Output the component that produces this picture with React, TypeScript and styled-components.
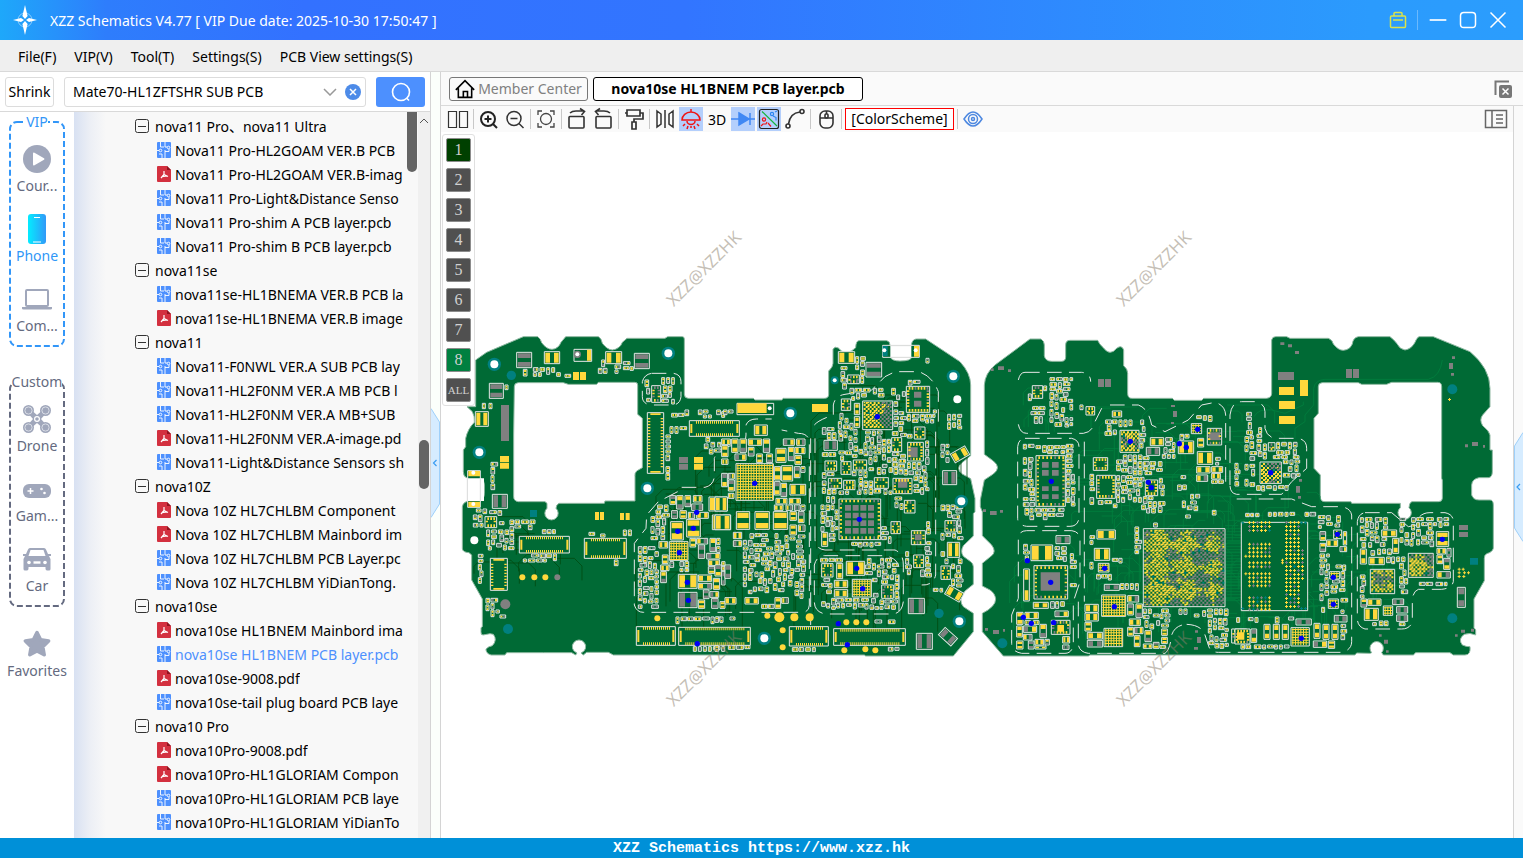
import React from "react";
import styled, { createGlobalStyle } from "styled-components";

const GlobalStyle = createGlobalStyle`
  * { box-sizing: border-box; }
  html, body { margin: 0; height: 100%; }
  body { font-family: "Noto Sans", "Noto Sans CJK SC", sans-serif; font-size: 14px; color: #000; background: #fff; }
  button, input { font: inherit; color: inherit; }
  button { border: 0; padding: 0; background: none; cursor: pointer; }
  svg { display: block; }
`;

/* ---------- shell ---------- */

const Shell = styled.div`
  display: flex;
  flex-direction: column;
  height: 100vh;
  overflow: hidden;
`;

const TitleBar = styled.header`
  display: flex;
  align-items: center;
  flex: 0 0 40px;
  padding: 0 15px 0 12px;
  color: #fff;
  background: linear-gradient(90deg, #1ea8fa 0%, #2e7dfc 7%, #3371ff 20%, #3275ff 45%, #2b9bfd 90%, #2b9dfd 100%);
`;

const AppTitle = styled.h1`
  flex: 1;
  margin: 0 0 0 12px;
  font-size: 14px;
  font-weight: 400;
  white-space: nowrap;
`;

const WindowButtons = styled.div`
  display: flex;
  align-items: center;
  gap: 10px;
`;

const TitleDivider = styled.span`
  width: 1px;
  height: 20px;
  background: #6bb9fd;
`;

const MenuBar = styled.nav`
  display: flex;
  align-items: center;
  gap: 18px;
  flex: 0 0 32px;
  padding: 2px 18px 0;
  background: #efefef;
  border-bottom: 1px solid #d9d9d9;
`;

const MenuButton = styled.button`
  white-space: nowrap;
`;

const Workspace = styled.div`
  display: flex;
  flex: 1;
  min-height: 0;
`;

const StatusBar = styled.footer`
  flex: 0 0 20px;
  overflow: hidden;
  background: #0090d8;
  color: #fff;
  text-align: center;
  font: bold 15px/22px "Liberation Mono", monospace;
`;

/* ---------- side bar ---------- */

const SideBar = styled.aside`
  display: flex;
  flex-direction: column;
  flex: 0 0 431px;
  min-width: 0;
  border-right: 1px solid #d4d4d4;
`;

const SearchRow = styled.form`
  display: flex;
  align-items: center;
  flex: 0 0 40px;
  padding: 0 5px;
  gap: 10px;
  border-bottom: 1px solid #d9d9d9;
`;

const ShrinkButton = styled.button`
  width: 49px;
  height: 30px;
  border: 1px solid #dcdcdc;
  border-radius: 3px;
  background: #fff;
`;

const SearchField = styled.div`
  display: flex;
  align-items: center;
  gap: 8px;
  flex: 1;
  height: 30px;
  padding: 0 4px 0 8px;
  border: 1px solid #dcdcdc;
  border-radius: 3px;
`;

const SearchInput = styled.input`
  flex: 1;
  min-width: 0;
  border: 0;
  padding: 0;
  outline: none;
  background: none;
`;

const SearchButton = styled.button`
  display: grid;
  place-items: center;
  width: 49px;
  height: 30px;
  border-radius: 3px;
  background: #4d90fe;
`;

const SideBody = styled.div`
  display: flex;
  flex: 1;
  min-height: 0;
`;

const Categories = styled.nav`
  display: flex;
  flex-direction: column;
  align-items: center;
  flex: 0 0 74px;
  overflow: hidden;
  background: #fff;
`;

const Group = styled.section<{ $color: string; $after: number }>`
  position: relative;
  display: flex;
  flex-direction: column;
  align-items: center;
  flex: none;
  width: 58px;
  height: 236px;
  margin-bottom: ${(p) => p.$after}px;
  color: ${(p) => p.$color};
`;

const Frame = styled.svg`
  position: absolute;
  inset: 9px 0 0 0;
  width: 58px;
  height: 227px;
`;

const GroupTitle = styled.h2`
  position: relative;
  margin: 0;
  background: #fff;
  font-size: 14px;
  line-height: 20px;
  font-weight: 400;
`;

const Category = styled.button<{ $active?: boolean }>`
  position: relative;
  display: flex;
  flex-direction: column;
  align-items: center;
  justify-content: flex-end;
  flex: none;
  height: 70px;
  padding-bottom: 6px;
  line-height: 20px;
  white-space: nowrap;
  color: ${(p) => (p.$active ? "#2f97f7" : "#646a80")};
`;

const CategoryIcon = styled.span`
  display: grid;
  place-items: center;
  height: 34px;
`;

const Tree = styled.ul`
  flex: 1;
  min-width: 0;
  margin: 0;
  padding: 2px 1px 0 60px;
  list-style: none;
  overflow: hidden;
  background: linear-gradient(90deg, #d8e1f2 0, #eceff5 16px, #f8f8f8 32px);
`;

const TreeRow = styled.li<{ $leaf?: boolean }>`
  display: flex;
  align-items: center;
  height: 24px;
  padding-left: ${(p) => (p.$leaf ? 23 : 1)}px;
  gap: ${(p) => (p.$leaf ? 4 : 6)}px;
`;

const TreeIcon = styled.span`
  flex: none;
`;

const TreeLabel = styled.a<{ $selected?: boolean }>`
  overflow: hidden;
  white-space: nowrap;
  text-decoration: none;
  color: ${(p) => (p.$selected ? "#4d90fe" : "#000")};
`;

const InnerTrack = styled.div`
  flex: 0 0 11px;
  background: #f8f8f8;
`;

const InnerThumb = styled.div`
  width: 10px;
  height: 60px;
  border-radius: 0 0 5px 5px;
  background: #646464;
`;

const OuterTrack = styled.div`
  display: flex;
  flex-direction: column;
  align-items: center;
  flex: 0 0 12px;
  padding-top: 6px;
  background: #f0f0f0;
`;

const OuterThumb = styled.div`
  width: 10px;
  height: 49px;
  margin-top: 316px;
  border-radius: 5px;
  background: #646464;
`;

/* ---------- splitter ---------- */

const Gutter = styled.div<{ $offset: number }>`
  flex: 0 0 9px;
  padding-top: ${(p) => p.$offset}px;
  background: #fbfffb;
`;

const RightGutter = styled(Gutter)`
  flex-basis: 10px;
  border-left: 1px solid #d4d4d4;
  background: #fafafa;
`;

/* ---------- main ---------- */

const Main = styled.main`
  display: flex;
  flex-direction: column;
  flex: 1;
  min-width: 0;
  border-left: 1px solid #d4d4d4;
`;

const TabRow = styled.div`
  display: flex;
  align-items: center;
  gap: 5px;
  flex: 0 0 34px;
  padding: 0 10px 0 8px;
  background: #fafafa;
  border-bottom: 1px solid #d9d9d9;
`;

const Tab = styled.button<{ $active?: boolean }>`
  display: flex;
  align-items: center;
  justify-content: center;
  gap: 3px;
  width: ${(p) => (p.$active ? 270 : 139)}px;
  height: 24px;
  border: 1px solid ${(p) => (p.$active ? "#000" : "#777")};
  border-radius: 3px;
  background: ${(p) => (p.$active ? "#fff" : "#fafafa")};
  color: ${(p) => (p.$active ? "#000" : "#808080")};
  font-weight: ${(p) => (p.$active ? 700 : 400)};
  white-space: nowrap;
`;

const Spacer = styled.span`
  flex: 1;
`;

const MainBody = styled.div`
  display: flex;
  flex: 1;
  min-height: 0;
`;

const ViewColumn = styled.div`
  display: flex;
  flex-direction: column;
  flex: 1;
  min-width: 0;
`;

const ToolBar = styled.div`
  display: flex;
  align-items: center;
  gap: 2px;
  flex: 0 0 26px;
  padding: 0 5px;
  background: #fafafa;
`;

const Tool = styled.button<{ $on?: boolean }>`
  display: grid;
  place-items: center;
  width: 24px;
  height: 24px;
  background: ${(p) => (p.$on ? "#b4cffc" : "none")};
`;

const ToolDivider = styled.span`
  width: 1px;
  height: 20px;
  margin: 0 1px;
  background: #c8c8c8;
`;

const SchemeButton = styled.button`
  width: 109px;
  height: 22px;
  border: 1px solid #f00;
  background: #fff;
  line-height: 18px;
`;

const Canvas = styled.div`
  position: relative;
  flex: 1;
  min-height: 0;
  background: #fff;
`;

const BoardDrawing = styled.svg`
  width: 100%;
  height: 100%;
`;

const LayerPanel = styled.div`
  position: absolute;
  left: 1px;
  top: 2px;
  display: flex;
  flex-direction: column;
  gap: 6px;
  padding: 3px;
  border: 1px solid #e0e0e0;
  border-radius: 3px;
  background: #fff;
`;

const LayerButton = styled.button<{ $fill: string; $long: boolean }>`
  width: 25px;
  height: 24px;
  border: 1px solid #8c8c8c;
  border-radius: 2px;
  background: ${(p) => p.$fill};
  color: #d0d0d0;
  font: ${(p) => (p.$long ? 11 : 16)}px/20px "Liberation Serif", serif;
`;

/* ---------- board drawing ---------- */

type Box = [number, number, number, number];

class Layers {
  silk = "";
  yellow = "";
  gray = "";
  teal = "";
}

// Small linear generator so that the parts sit in the same place on each draw.
const makeRandom = (seed: number) => {
  let s = seed;
  return () => {
    s = (s * 1103515245 + 12345) & 0x7fffffff;
    return s / 0x7fffffff;
  };
};

const rect = (x: number, y: number, w: number, h: number) => `M${x} ${y}h${w}v${h}h${-w}z`;

const addPart = (l: Layers, kind: string, b: Box, rnd: () => number) => {
  const [x, y, w, h] = b;
  const outline = () => {
    l.silk += rect(x, y, w, h);
  };
  switch (kind) {
    case "y": l.yellow += rect(x, y, w, h); break;
    case "g": l.gray += rect(x, y, w, h); break;
    case "t": l.teal += rect(x, y, w, h); break;
    case "o": outline(); break;
    case "h":
    case "hg": {
      outline();
      const p = Math.round(w * 0.3);
      const d = rect(x + 3, y + 3, p, h - 6) + rect(x + w - 3 - p, y + 3, p, h - 6);
      if (kind === "h") l.yellow += d; else l.gray += d;
      break;
    }
    case "v":
    case "vg": {
      outline();
      const p = Math.round(h * 0.3);
      const d = rect(x + 3, y + 3, w - 6, p) + rect(x + 3, y + h - 3 - p, w - 6, p);
      if (kind === "v") l.yellow += d; else l.gray += d;
      break;
    }
    case "cn":
      outline();
      for (let i = x + 20; i < x + w - 18; i += 6) {
        l.yellow += rect(i, y + 1, 3, 8) + rect(i, y + h - 9, 3, 8);
      }
      l.yellow += rect(x + 3, y + 10, 6, h - 20) + rect(x + w - 9, y + 10, 6, h - 20);
      break;
    case "cv":
      outline();
      for (let i = y + 16; i < y + h - 14; i += 9) {
        l.yellow += rect(x + 2, i, 7, 4) + rect(x + w - 9, i, 7, 4);
      }
      l.yellow += rect(x + 9, y + 2, w - 18, 5) + rect(x + 9, y + h - 7, w - 18, 5);
      break;
    case "ic": {
      outline();
      const step = w > 80 ? 12 : 9;
      const add = (d: string) => {
        if (rnd() < 0.22) l.gray += d; else l.yellow += d;
      };
      for (let i = x + 7; i < x + w - 8; i += step) {
        add(rect(i, y + 2, 5, 8));
        add(rect(i, y + h - 10, 5, 8));
      }
      for (let i = y + 12; i < y + h - 12; i += step) {
        add(rect(x + 2, i, 7, 5));
        add(rect(x + w - 9, i, 7, 5));
      }
      break;
    }
    case "b":
      outline();
      for (let i = x + 4; i < x + w - 3; i += 8) l.yellow += rect(i, y + 2, 3, h - 4);
      for (let j = y + 4; j < y + h - 3; j += 8) l.yellow += rect(x + 2, j, w - 4, 3);
      break;
    case "x":
      outline();
      for (let j = y + 3; j < y + h - 5; j += 6) {
        for (let i = x + 3; i < x + w - 5; i += 6) {
          const zone = Math.sin(i / 13) * 0.5 + Math.cos(j / 11) * 0.5 + ((i - x) / w) * 1.1;
          const odd = ((i - x + j - y) / 6) % 2 === 0;
          if (!odd && rnd() < 0.6) continue;
          const d = rect(i, j, odd ? 6 : 4, odd ? 6 : 4);
          if (rnd() < 0.03) l.teal += d;
          else if (zone + rnd() > 1.25) l.gray += d;
          else l.yellow += d;
        }
      }
      break;
    default:
      break;
  }
};

const addSmall = (l: Layers, x: number, y: number, w: number, h: number, rnd: () => number) => {
  l.silk += rect(x, y, w, h);
  const horizontal = w >= h;
  const c = rnd();
  const lw = Math.max(4, w * 0.3);
  const lh = Math.max(4, h * 0.3);
  const first = horizontal ? rect(x + 2, y + 2, lw, h - 4) : rect(x + 2, y + 2, w - 4, lh);
  const second = horizontal ? rect(x + w - 2 - lw, y + 2, lw, h - 4) : rect(x + 2, y + h - 2 - lh, w - 4, lh);
  if (c < 0.5) l.yellow += first + second;
  else if (c < 0.75) { l.yellow += first; l.gray += second; }
  else if (c < 0.92) { l.gray += first; l.yellow += second; }
  else l.gray += first + second;
};

const hits = (a: Box, b: Box) =>
  a[0] < b[0] + b[2] + 3 && a[0] + a[2] + 3 > b[0] && a[1] < b[1] + b[3] + 3 && a[1] + a[3] + 3 > b[1];

const buildSheet = (parts: string, fields: string, seed: number): Layers => {
  const l = new Layers();
  const rnd = makeRandom(seed);
  const taken: Box[] = [];
  for (const p of parts.split(";")) {
    const [kind, ...n] = p.trim().split(" ");
    const b = n.map(Number) as Box;
    taken.push(b);
    addPart(l, kind, b, rnd);
  }
  for (const f of fields.split(";")) {
    const [fx, fy, fw, fh, big = 0] = f.trim().split(" ").map(Number);
    const unit = big ? 4 : 0;
    for (let y = fy; y < fy + fh - 7; y += 5) {
      for (let x = fx; x < fx + fw - 7; x += 5) {
        if (rnd() < 0.12) continue;
        const flip = rnd() < 0.5;
        const a = 14 + unit * 3 + Math.floor(rnd() * 3) * (3 + unit);
        const c = 9 + unit * 2 + Math.floor(rnd() * 2) * 2;
        const w = Math.min(flip ? a : c, fx + fw - x);
        const h = Math.min(flip ? c : a, fy + fh - y);
        const box: Box = [x, y, w, h];
        if (taken.some((t) => hits(box, t))) continue;
        taken.push(box);
        if (rnd() < 0.1) continue;
        addSmall(l, x, y, w, h, rnd);
      }
    }
  }
  return l;
};

const grid = (kind: string, x: number, y: number, cols: number, rows: number, dx: number, dy: number, w: number, h: number) => {
  const out: string[] = [];
  for (let j = 0; j < rows; j++) for (let i = 0; i < cols; i++) out.push(`${kind} ${x + i * dx} ${y + j * dy} ${w} ${h}`);
  return out.join(";");
};

const sheetA = buildSheet(
  "vg 185 82 45 46;h 268 80 46 36;o 357 73 53 36;y 396 74 12 33;h 452 80 48 36;vg 538 85 45 46;y 354 141 18 24;y 375 141 18 24;vg 103 175 42 45;g 138 240 24 108;h 61 260 39 44;y 135 393 27 18;y 135 413 27 18;hg 112 508 45 42;ic 90 575 35 33;cn 193 634 150 50;cn 388 640 126 60;cv 106 700 51 96;cv 577 263 49 182;ic 590 182 27 50;g 672 396 27 18;g 672 416 27 18;y 717 396 27 18;y 717 416 27 18;y 420 561 12 24;y 435 561 12 24;y 495 564 12 21;y 512 564 12 21;cn 703 287 150 47;v 647 590 38 55;v 695 583 41 53;h 762 516 55 42;h 772 570 55 44;b 643 650 56 56;h 670 748 56 42;hg 670 802 56 46;cn 544 905 117 56;cn 671 907 215 54;o 38 437 38 110;y 40 438 35 16;y 40 530 35 16;t 225 555 21 21",
  "205 128 115 26;430 105 30 40;480 110 55 35;570 165 18 65;620 158 38 80;64 552 90 22;55 570 32 36;128 575 24 36;165 585 75 35;95 615 85 60;205 687 100 24;93 820 40 55;135 870 24 20;645 265 50 60;690 255 120 24;748 337 55 50;628 330 18 138;588 540 55 115;645 512 115 68 1;550 665 60 185;612 645 30 200 1;705 640 90 105 1;730 740 80 110 1;610 710 200 30;663 876 150 20;402 622 48 16;108 412 22 90;70 688 14 88;690 965 120 14;262 614 42 12;150 180 12 42;82 235 32 16;330 148 22 12;505 615 24 18;478 700 12 24",
  7,
);

const sheetB = buildSheet(
  "y 67 235 88 29;o 66 235 110 34;y 291 237 48 24;h 118 300 39 31;vg 453 112 47 44;h 370 80 49 35;x 443 228 90 86;ic 574 184 70 78;g 597 200 22 18;g 597 227 22 18;ic 398 150 35 26;b 63 416 112 110;ic 372 522 125 122;" +
    grid("g", 390, 540, 4, 4, 23, 23, 18, 17) +
    ";v 183 370 30 42;v 200 422 33 46;h 225 478 47 32;v 64 560 40 53;v 120 560 43 53;v 175 560 43 53;h 0 516 37 42;h 0 570 46 44;ic 578 352 47 56;g 580 367 28 30;ic 534 460 57 46;g 549 462 28 26;ic 589 617 42 42;g 600 628 20 18;hg 683 437 42 42;ic 690 587 34 34;h 697 652 37 45;ic 678 723 28 40;hg 580 820 48 46;hg 604 925 48 48;h 394 709 55 42;b 412 763 57 53;ic 500 780 35 40;cn 223 905 117 58;cn 356 911 215 50;ic 320 716 34 40;ic 379 222 28 34;v 418 235 16 34;v 418 275 16 32;ic 330 408 35 30;ic 378 410 30 38;ic 415 405 40 30;ic 478 458 42 32;ic 386 466 34 28;ic 340 460 40 30;ic 598 306 32 36;ic 596 690 30 38;ic 528 590 28 36;ic 530 338 30 42;hg 327 346 40 30;y 597 63 15 32;t 503 63 15 30;o 503 61 110 36;ic 568 526 32 38;v 320 622 18 42;v 365 715 18 46;h 358 766 40 22;h 358 794 40 22",
  "20 342 250 76 1;178 420 92 100 1;20 425 38 95 1;178 520 92 36 1;225 560 45 70 1;55 622 25 70 1;85 626 155 180;240 630 32 190;0 720 55 40 1;30 818 190 32 1;378 125 18 70;422 95 30 90;370 265 48 60;405 190 160 36;532 195 42 145;562 268 98 26;322 308 320 200;318 540 42 110;335 515 34 100;500 590 28 66;540 516 26 40;312 700 240 70;320 765 232 88;410 652 118 14;572 680 78 82;630 590 18 88;678 540 66 165;680 702 64 84;580 166 52 14;650 220 14 66;698 268 42 56;678 358 24 88;0 962 105 18;232 968 80 12;480 885 70 22;520 962 32 26;0 876 60 16;0 255 56 22;618 100 30 24;655 790 28 20",
  23,
);

const sheetC = buildSheet(
  "ic 172 182 31 38;g 369 162 18 24;g 390 162 18 24;ic 183 392 88 152;" +
    grid("g", 201, 411, 2, 2, 30, 24, 20, 17) + ";" + grid("g", 201, 484, 2, 2, 30, 24, 20, 14) +
    ";x 435 316 57 66;h 526 338 40 24;hg 514 367 40 24;h 610 348 46 38;ic 697 310 43 50;g 701 322 34 24;h 667 380 46 38;ic 355 398 43 38;ic 365 451 56 69;ic 511 465 37 47;b 649 296 31 30;h 168 660 65 47;ic 177 722 101 100;g 197 742 58 55;h 358 670 46 36;h 366 615 55 27;x 505 611 245 234;b 380 810 72 64;b 387 910 56 55;h 330 838 40 24;h 330 864 40 24;ic 229 886 56 42;y 247 900 20 20;ic 770 912 45 42;h 175 832 45 18;hg 388 778 45 18;g 69 124 18 11;g 48 130 8 8;g 99 133 9 8;g 45 558 20 12;g 24 553 9 8;g 75 555 9 8;g 594 258 12 18;g 588 240 12 6;g 588 291 9 6;g 54 915 18 12;g 30 909 9 8;g 84 912 6 8;g 666 936 12 18;g 660 916 9 7;g 657 966 12 8;h 412 258 28 18;b 370 715 32 26;v 146 732 17 96;hg 243 632 42 24;ic 333 245 26 25;h 337 922 46 20;hg 337 946 46 20;y 803 590 7 4",
  "160 172 12 64;206 178 12 30;225 158 68 148;168 245 42 50;315 235 20 32;392 285 118 36;390 315 42 20;495 320 26 60;562 338 38 62;425 390 145 60;425 452 82 80;500 515 70 52;548 455 20 60;345 448 18 90;370 522 60 26;145 358 34 195;274 358 26 185;183 362 88 24;150 550 122 34;610 328 32 18;618 452 28 14;608 480 60 16;622 508 52 54;632 570 24 22;712 556 36 16;480 606 22 80;146 658 20 60;240 665 36 44;286 686 18 100;222 830 56 20;125 862 98 36 1;125 898 98 74 1;240 858 44 22 1;238 935 46 38 1;345 632 18 26;345 712 22 34;365 748 46 22;412 700 34 16;436 776 58 26;458 812 46 160 1;505 852 80 60;505 912 72 58 1;612 852 30 16;658 852 108 26;700 880 60 90;330 892 46 26 1;665 272 80 24;665 425 80 50 1;722 372 20 48;668 340 18 34 1;708 244 20 22;780 415 15 68;536 594 18 12;715 296 28 14;570 338 30 20",
  41,
);

const plus = (x: number, y: number) => `M${x} ${y + 3}h9v3h-9zM${x + 3} ${y}h3v9h-3z`;

const sheetD = buildSheet(
  "g 129 141 48 24;y 132 186 45 24;y 132 228 48 24;y 132 273 48 24;y 195 165 24 48;g 333 132 18 27;g 354 132 18 27;x 75 411 64 64;o 19 592 199 265;ic 100 353 20 25;h 440 615 45 20;v 473 640 18 45;v 604 620 37 44;x 520 685 75 72;x 406 733 73 73;h 388 850 42 36;b 445 843 28 28;b 168 908 55 55;v 87 898 18 45;v 115 898 18 45;v 142 898 18 45;v 237 895 18 45;v 264 898 18 45;v 291 898 18 45;ic 0 912 45 45;y 6 922 22 22;vg 667 787 24 60;g 672 600 27 15;g 672 621 27 15;t 705 699 24 20;h 402 697 46 22;v 376 672 18 45;hg 183 882 46 18;hg 298 871 38 20;g 642 114 12 18;g 651 94 9 8;g 648 144 9 8;g 711 351 18 12;g 690 358 9 9;g 744 360 6 8;g 183 483 12 20;g 192 462 9 8;g 189 513 9 8;g 159 58 12 9;g 180 78 12 9;g 136 52 12 8;g 678 914 12 9;g 708 911 9 9;g 660 928 8 7;g 447 944 12 12;g 432 928 8 7;g 453 976 8 7;b 284 740 30 22;b 280 822 30 28;ic 296 615 24 26",
  "35 262 20 80;66 308 14 68;30 335 54 78;85 352 112 50;30 418 42 70;145 375 50 92;60 482 100 16;12 565 60 10;100 562 142 12;250 572 66 38;255 620 80 60 1;255 682 28 180;288 720 48 84;318 820 22 45;5 878 72 22;116 876 60 18;256 876 40 16;48 912 26 48 1;18 960 145 12;235 948 100 22 1;318 898 18 46;376 578 82 92;408 672 88 24;450 696 60 26;495 578 110 92;606 670 42 100 1;376 735 24 84;378 822 140 24 1;485 845 34 44 1;388 888 130 14;494 700 24 112;548 772 88 10;562 578 80 34;34 345 16 26",
  59,
);

const memoryDots = () => {
  let yellow = "";
  let gray = "";
  let teal = "";
  const rnd = makeRandom(11);
  const put = (x: number, y: number) => {
    const c = rnd();
    if (c < 0.72) yellow += plus(x, y);
    else if (c < 0.94) gray += plus(x, y);
    else teal += plus(x, y);
  };
  [588, 600, 612, 653, 665, 677, 689, 709, 721, 742, 754, 766, 778, 814, 826, 838, 848].forEach((y) => {
    for (let x = 39; x < 110; x += 12) put(x, y);
  });
  for (let y = 588; y < 852; y += 12) {
    const last = y > 670 && y < 765 ? 200 : 188;
    for (let x = 150; x < last; x += 12) put(x, y);
  }
  [[28, 689], [28, 742], [138, 701], [138, 709]].forEach(([x, y]) => { yellow += plus(x, y); });
  [[19, 589], [207, 589], [19, 846], [207, 846], [195, 589], [195, 846]].forEach(([x, y]) => { teal += plus(x, y); });
  [[668, 728], [680, 728], [668, 739], [684, 739], [696, 739], [668, 750], [682, 750], [639, 219]].forEach(([x, y]) => { yellow += plus(x, y); });
  return { yellow, gray, teal };
};
const memory = memoryDots();

// Copper traces: short runs with one 45 degree bend, kept above the board's lower edge.
const traces = (fields: string, seed: number) => {
  const rnd = makeRandom(seed);
  let d = "";
  for (const f of fields.split(";")) {
    const [x, y, w, h, n] = f.trim().split(" ").map(Number);
    for (let i = 0; i < n; i++) {
      const k = Math.round(8 + rnd() * 20);
      const sx = rnd() < 0.5 ? 1 : -1;
      const run = Math.round(20 + rnd() * w * 0.25);
      const fall = Math.round(20 + rnd() * h * 0.25);
      const x0 = Math.round(x + rnd() * w);
      const y0 = Math.round(y + rnd() * h);
      d += `M${x0} ${y0}h${run * sx}l${k * sx} ${k}V${Math.min(y0 + k + fall, 970)}`;
    }
  }
  return d;
};
const darkTraces = traces("600 480 200 340 40;800 340 240 470 60;1100 180 330 640 110;1340 300 100 450 14;110 560 220 160 18", 5);
const lightTraces = traces("1900 240 480 320 60;1900 560 180 300 30;2130 500 220 330 40;2340 480 250 400 60;2590 580 260 250 24;1700 640 160 200 14;1720 170 140 120 8", 9);
const busLines = Array.from({ length: 26 }, (_, i) => `M${2310 + (i % 3) * 3} ${602 + i * 9}h${40 + (i % 5) * 6}`).join("");

const LEFT_BOARD =
  "M62 105 L95 82 L205 35 H248 Q258 42 260 53 Q275 73 291 73 Q310 72 318 52 L332 35 H430 Q440 40 442 55 Q458 75 472 75 Q495 72 502 52 L516 40 H630 L638 35 H682 Q688 35 688 42 V208 Q688 220 700 220 H895 L900 225 H980 L985 220 H1108 Q1121 220 1121 208 V138 Q1134 126 1134 115 V72 Q1140 63 1150 69 Q1160 82 1172 82 Q1190 82 1202 68 Q1203 47 1212 47 H1295 Q1305 48 1305 60 V95 Q1310 108 1335 108 Q1370 108 1370 95 V55 Q1374 42 1385 42 H1412 L1515 110 Q1547 145 1547 180 V392 L1520 414 Q1502 430 1520 446 L1547 461 L1560 520 V560 L1555 566 V633 L1525 662 Q1515 680 1525 694 L1547 710 Q1555 716 1555 725 V778 L1530 798 Q1508 825 1525 845 L1555 865 V920 L1495 993 H1232 L1228 990 H475 L460 982 H395 L385 990 L378 984 A20 20 0 1 0 366 984 L362 990 L350 983 H265 L258 983 H155 L150 990 H108 Q92 985 93 972 Q100 964 112 962 Q128 945 115 928 Q105 924 95 928 L84 930 Q77 930 78 920 V908 L82 905 V822 L50 765 V690 L42 683 Q22 682 22 670 V545 Q25 530 40 529 H75 Q88 522 88 505 V478 Q86 460 70 458 H35 Q25 455 25 440 V375 L32 365 V340 Q38 312 58 292 Q60 275 52 260 L36 245 H62 Z M190 173 H325 L340 178 H425 L430 172 H540 Q548 172 548 180 V268 L562 280 V428 L545 438 Q538 445 540 455 V528 H450 L448 535 H312 Q303 540 303 550 A20 20 0 1 1 276 550 V535 L270 530 H190 Q176 528 176 515 V330 L178 185 Q178 173 190 173 Z";

const RIGHT_BOARD =
  "M1725 42 H1758 Q1768 48 1768 60 V92 Q1770 108 1790 109 H1820 Q1833 108 1832 94 V60 Q1832 46 1845 46 H1928 Q1934 60 1945 68 Q1965 95 1985 70 Q2000 58 2006 75 V122 Q2018 132 2018 145 V205 Q2018 220 2030 220 H2152 L2158 226 H2240 L2246 220 H2435 Q2450 218 2450 205 V45 Q2452 35 2462 35 H2495 L2505 40 H2620 Q2633 45 2635 57 Q2650 76 2665 76 Q2685 74 2692 57 Q2694 38 2710 35 H2805 Q2818 45 2825 55 Q2835 74 2850 75 Q2870 72 2880 52 Q2885 38 2892 35 H2935 L3045 80 Q3105 130 3105 190 V245 L3083 270 Q3072 284 3083 302 Q3103 318 3105 330 V375 H3112 V440 Q3112 457 3100 458 H3072 Q3051 462 3050 480 V510 Q3055 525 3072 525 H3105 Q3115 525 3115 540 V670 Q3112 682 3095 686 Q3088 690 3088 700 V767 L3057 822 V908 L3062 915 V930 Q3045 922 3028 928 Q3008 942 3022 960 Q3035 966 3045 965 Q3048 990 3030 990 H2995 L2985 983 H2882 L2875 990 H2785 L2780 983 A20 20 0 1 0 2750 983 L2745 985 L2705 984 L2700 990 H1905 L1900 993 H1645 L1582 920 V865 Q1622 845 1622 822 Q1620 805 1605 795 L1582 783 V715 L1610 692 Q1625 680 1610 660 L1582 632 V560 L1576 545 V525 L1588 465 L1615 447 Q1640 428 1615 408 L1588 388 V180 Q1590 145 1620 120 Z M2602 173 H2710 L2720 178 H2795 L2810 172 H2948 Q2960 172 2960 185 V460 L2962 465 V520 Q2962 530 2950 530 H2870 Q2862 535 2862 548 A20 20 0 1 1 2836 548 V535 L2690 535 L2688 530 H2610 Q2596 530 2596 515 V450 L2577 430 V280 L2590 265 V185 Q2590 173 2602 173 Z";

const SHIELDS =
  "M668 500L610 530L575 570L573 610L538 655V840Q545 862 565 862H1040Q1063 862 1063 840V350Q1060 325 1030 325L980 315" +
  "M680 487H750Q778 480 778 450V400Q790 365 830 362H850Q873 355 873 330V300Q880 282 905 282H950" +
  "M590 145H655Q678 148 678 170V215Q675 240 650 240H585Q562 235 562 215V170Q568 148 590 145" +
  "M1078 300Q1090 285 1135 270V240Q1140 212 1170 208L1250 195L1290 155L1320 140H1390Q1430 150 1450 200V290M1442 320V750Q1435 782 1400 780" +
  "M1080 340V640Q1080 672 1110 675H1320Q1345 685 1345 720V830Q1340 867 1310 867H1110Q1078 860 1078 830V720Q1085 692 1110 692H1290Q1330 700 1332 730V860M1067 340V900" +
  "M1710 142H1880Q1907 145 1907 170M1690 165Q1695 142 1710 142M1690 298Q1695 325 1715 325H1885Q1910 322 1915 300L1945 240" +
  "M1710 340H1850Q1872 345 1872 365V580Q1868 604 1845 604H1715Q1688 600 1688 580V365Q1690 342 1710 340" +
  "M1690 820V640Q1692 617 1715 617H1850Q1875 620 1875 645V770L1855 830V960Q1850 985 1830 985H1700Q1670 980 1670 955V870L1690 820" +
  "M1888 350V830M1870 830V960Q1875 982 1900 985H2130Q2145 975 2150 930Q2160 900 2195 898M2195 898Q2240 900 2250 930L2260 960Q2265 982 2290 982H2660Q2690 975 2690 950V570Q2685 545 2650 545H2570L2510 522H2345" +
  "M1965 240H2050Q2080 250 2090 300L2130 320L2200 285L2240 240L2280 232Q2310 240 2312 270V480M2325 480V270Q2330 230 2360 230H2400Q2430 235 2430 260V310Q2435 335 2460 340H2530Q2555 345 2555 370V430L2510 470L2480 508H2345Q2325 505 2325 480" +
  "M2730 563H2810L2860 605L2885 600V590Q2895 563 2925 563H2970Q2995 568 2995 590V770Q2990 790 2960 793H2890Q2872 800 2872 830V890Q2865 912 2840 912H2730Q2707 905 2707 880V590Q2710 566 2730 563";

type Dot = [number, number, number];
const yellowDots: Dot[] = [[202, 757, 9], [238, 757, 9], [271, 757, 9], [607, 880, 9], [973, 877, 15], [1018, 877, 12], [1064, 877, 12], [983, 916, 9], [983, 967, 9], [937, 872, 9], [1174, 892, 9], [1204, 892, 9], [1234, 892, 9], [1168, 976, 9], [1231, 973, 9], [1261, 976, 9]];
const grayDots: Dot[] = [[307, 757, 9], [151, 838, 15], [367, 88, 11]];
const tealDots: Dot[] = [[169, 151, 14], [159, 912, 15], [1452, 865, 14], [1642, 955, 15], [2992, 193, 15], [2992, 880, 15], [118, 118, 20], [640, 85, 20], [73, 382, 20], [577, 490, 20], [1006, 265, 20], [1495, 154, 20], [1519, 529, 20], [1513, 889, 20], [928, 940, 20], [1139, 166, 12]];
const holes: Dot[] = [[118, 118, 12], [640, 85, 12], [73, 382, 12], [577, 490, 12], [58, 646, 12], [367, 88, 6], [55, 443, 6], [55, 537, 6], [1006, 265, 12], [1495, 154, 12], [1507, 223, 12], [1519, 529, 12], [1513, 889, 12], [928, 940, 12], [944, 250, 6], [1139, 166, 6], [1288, 76, 6], [1382, 76, 6]];
const blueDots: Dot[] = [[725, 562, 8], [668, 619, 8], [715, 610, 8], [673, 683, 8], [697, 772, 8], [700, 826, 8], [727, 956, 8], [899, 475, 8], [1267, 275, 8], [1213, 583, 8], [1205, 730, 8], [1223, 791, 8], [1150, 896, 8], [1177, 959, 8], [2026, 349, 8], [2173, 356, 8], [2194, 367, 8], [2228, 313, 8], [1789, 469, 8], [2080, 472, 8], [2089, 488, 8], [1717, 707, 8], [1787, 772, 8], [1949, 730, 8], [1978, 845, 8], [1705, 877, 8], [1729, 895, 8], [1796, 893, 8], [2447, 443, 8], [2647, 628, 8], [2962, 643, 8], [2635, 757, 8], [2635, 838, 8], [2539, 940, 8]];

const Dots = ({ list, fill }: { list: Dot[]; fill: string }) => (
  <g fill={fill}>
    {list.map(([x, y, r]) => (
      <circle key={`${x}-${y}`} cx={x} cy={y} r={r} />
    ))}
  </g>
);

const Sheet = ({ layers, x }: { layers: Layers; x: number }) => (
  <g transform={`translate(${x} 0)`}>
    <path d={layers.silk} fill="#006a35" stroke="#e8e8e8" strokeWidth="3" />
    <path d={layers.teal} fill="#008080" />
    <path d={layers.gray} fill="#808080" />
    <path d={layers.yellow} fill="#ffd83c" />
  </g>
);

const slanted: [number, number, number, string][] = [[1515, 388, -30, "#ffd83c"], [1498, 806, 30, "#ffd83c"], [1479, 935, 42, "#808080"]];

const Boards = () => (
  <BoardDrawing viewBox="441 132 1072 706" role="img" aria-label="PCB layer view">
    <g transform="translate(455 325) scale(0.33333)">
      <g fill="#006a35" fillRule="evenodd" stroke="#8fb9a2" strokeWidth="3">
        <path d={LEFT_BOARD} />
        <path d={RIGHT_BOARD} />
      </g>
      <g fill="none" strokeWidth="2.4">
        <path d={darkTraces} stroke="#004a10" />
        <path d={lightTraces + busLines} stroke="#00803f" />
        <path d="M2397 275Q2410 250 2450 255L2490 265L2545 240V230M2520 340V310L2550 290V270L2576 240V190Q2580 165 2610 163H2920Q2955 155 2962 105" stroke="#00803f" />
      </g>
      <path d={SHIELDS} fill="none" stroke="#e8e8e8" strokeWidth="3" strokeDasharray="44 22" />
      <Sheet layers={sheetA} x={0} />
      <Sheet layers={sheetB} x={780} />
      <Sheet layers={sheetC} x={1560} />
      <Sheet layers={sheetD} x={2340} />
      <g transform="translate(2340 0)">
        <path d={memory.gray} fill="#808080" />
        <path d={memory.teal} fill="#008080" />
        <path d={memory.yellow} fill="#ffd83c" />
      </g>
      <path d="M38 460h49v68h-49zM1306 62h63v34h-63z" fill="#fff" />
      <path d="M37 460v68M76 460v68M1306 62h63M1306 97h63" stroke="#ddd" strokeWidth="3" />
      {slanted.map(([x, y, a, c]) => (
        <g key={`${x}-${y}`} transform={`translate(${x} ${y}) rotate(${a})`}>
          <rect x="-25" y="-15" width="50" height="30" fill="#006a35" stroke="#e4e4e4" strokeWidth="3" />
          <path d="M-22-12h14v24h-14zM8-12h14v24h-14z" fill={c} />
        </g>
      ))}
      <Dots list={tealDots} fill="#008080" />
      <Dots list={grayDots} fill="#808080" />
      <Dots list={yellowDots} fill="#ffd83c" />
      <Dots list={holes} fill="#fff" />
      <Dots list={blueDots} fill="#0000f5" />
    </g>
    <g fill="#8c7f6e" fillOpacity="0.5" fontSize="17" textAnchor="middle">
      {[[703, 268], [1153, 268], [703, 668], [1153, 668]].map(([x, y]) => (
        <text key={`${x}-${y}`} transform={`translate(${x + 5} ${y + 5}) rotate(-45)`}>XZZ@XZZHK</text>
      ))}
    </g>
  </BoardDrawing>
);

/* ---------- icons ---------- */

const Icon = ({ size = 24, color = "#333", width = 1.6, children }: { size?: number; color?: string; width?: number; children: React.ReactNode }) => (
  <svg width={size} height={size} viewBox="0 0 24 24" fill="none" stroke={color} strokeWidth={width} aria-hidden="true">
    {children}
  </svg>
);

const Logo = () => (
  <svg width="26" height="32" viewBox="0 0 26 32" aria-hidden="true">
    <circle cx="13" cy="16" r="7" fill="none" stroke="#fff" strokeOpacity=".45" />
    <path d="M13 1l2.6 11L13 15l-2.6-3zM13 31l2.6-11L13 17l-2.6 3zM1 16l8-2 3 2-3 2zM25 16l-8-2-3 2 3 2z" fill="#fff" />
  </svg>
);

const BoardFileIcon = () => (
  <svg width="14" height="16" viewBox="0 0 14 16" aria-hidden="true">
    <rect width="14" height="16" rx="1" fill="#4d90fe" />
    <path d="M3.500 0v5H7M8 0v5h2M0 8.500h2M8 8v8M5 16v-4h-3" fill="none" stroke="#fff" strokeWidth=".9" />
    <path d="M8 9.500h4V7" fill="none" stroke="#fff" strokeWidth=".9" />
    <g fill="#4d90fe" stroke="#fff" strokeWidth=".9">
      <circle cx="11.500" cy="5.500" r="1.300" /><circle cx="3.500" cy="8.500" r="1.300" />
    </g>
  </svg>
);

const PdfIcon = () => (
  <svg width="14" height="16" viewBox="0 0 14 16" aria-hidden="true">
    <path d="M1 0h9l4 4v11a1 1 0 0 1-1 1H1a1 1 0 0 1-1-1V1a1 1 0 0 1 1-1z" fill="#d3303f" />
    <path d="M10 0l4 4h-4z" fill="#8f1420" />
    <path d="M7 5v3.500L4 12M7 8.500l4 2M5 10.600l5-.6" fill="none" stroke="#fff" strokeWidth="1.200" />
  </svg>
);

const CollapseIcon = () => (
  <svg width="14" height="14" viewBox="0 0 14 14" fill="none" stroke="#333" aria-hidden="true">
    <rect x=".5" y=".5" width="13" height="13" rx="2" /><path d="M3 7.500h8" />
  </svg>
);

const mute = "#a0a7bb";

const CourseIcon = () => (
  <svg width="28" height="28" viewBox="0 0 28 28"><circle cx="14" cy="14" r="14" fill={mute} /><path d="M10 8.500v11a1 1 0 0 0 1.500.8l9.500-5.500a1 1 0 0 0 0-1.600l-9.500-5.500a1 1 0 0 0-1.500.8z" fill="#fff" /></svg>
);
const PhoneIcon = () => (
  <svg width="18" height="30" viewBox="0 0 18 30">
    <defs><linearGradient id="phone" x1="0" x2="1"><stop offset="0" stopColor="#04ecff" /><stop offset="1" stopColor="#3199f8" /></linearGradient></defs>
    <rect width="18" height="30" rx="3" fill="url(#phone)" /><path d="M6 3.500h6M5 28h8" stroke="#fff" strokeWidth="1.200" />
  </svg>
);
const LaptopIcon = () => (
  <svg width="30" height="21" viewBox="0 0 30 21"><rect x="4" y="1" width="22" height="16" rx="1" fill="none" stroke={mute} strokeWidth="2" /><path d="M0 18h30v1.500q0 1-1.500 1h-27q-1.500 0-1.500-1z" fill={mute} /></svg>
);
const DroneIcon = () => (
  <svg width="28" height="28" viewBox="0 0 28 28" fill={mute}>
    <path d="M6 3l8 7 8-7 3 3-7 8 7 8-3 3-8-7-8 7-3-3 7-8-7-8z" />
    {[[5.5, 5.5], [22.5, 5.5], [5.5, 22.5], [22.5, 22.5]].map(([x, y]) => (
      <g key={`${x}-${y}`}><circle cx={x} cy={y} r="5.500" /><circle cx={x} cy={y} r="3.600" fill="none" stroke="#dfe2ea" strokeWidth=".9" /></g>
    ))}
    <circle cx="14" cy="14" r="2.400" stroke="#fff" strokeWidth="1.200" />
  </svg>
);
const PadIcon = () => (
  <svg width="28" height="18" viewBox="0 -4 28 18"><rect width="28" height="14" rx="6" fill={mute} /><path d="M4.500 7h6M7.500 4v6" stroke="#fff" strokeWidth="1.500" /><circle cx="18.500" cy="5" r="1.300" fill="#fff" /><circle cx="21.500" cy="9" r="1.300" fill="#fff" /></svg>
);
const CarIcon = () => (
  <svg width="28" height="24" viewBox="0 0 28 24">
    <path d="M7 1h14q1.500 0 2 1.500L25 7h3v2h-2l1.500 3v10q0 1.500-1.500 1.500h-2q-1.500 0-1.500-2V20h-17v1.500q0 2-1.500 2H2Q.5 23.500.5 22V12L2 9H0V7h3l2-4.500Q5.500 1 7 1z" fill={mute} />
    <path d="M7.500 3h13l2 6h-17z" fill="#fff" /><circle cx="6" cy="15.500" r="1.800" fill="#fff" /><circle cx="22" cy="15.500" r="1.800" fill="#fff" /><path d="M10.500 15.500h7" stroke="#fff" strokeWidth="2.400" />
  </svg>
);
const StarIcon = () => (
  <svg width="28" height="28" viewBox="0 0 28 28"><path d="M14 2.500l3.600 7.300 8 1.200-5.800 5.700 1.400 8L14 21 6.800 24.700l1.400-8L2.400 11l8-1.200z" fill={mute} stroke={mute} strokeWidth="3.500" strokeLinejoin="round" /></svg>
);

const Handle = () => (
  <svg width="9" height="110" viewBox="0 0 9 110" aria-hidden="true">
    <path d="M9 .5L.5 14V96L9 109.500" fill="#d6ecff" stroke="#9ed0fa" />
    <path d="M6 52L3 55l3 3" fill="none" stroke="#3a9cf2" strokeWidth="1.200" />
  </svg>
);
const LeftHandle = () => (
  <svg width="9" height="110" viewBox="0 0 9 110" aria-hidden="true">
    <path d="M0 .5L8.500 14V96L0 109.500" fill="#d6ecff" stroke="#9ed0fa" />
    <path d="M5.500 52L2.500 55l3 3" fill="none" stroke="#3a9cf2" strokeWidth="1.200" />
  </svg>
);

/* ---------- data ---------- */

type Node = { name: string; kind: "folder" | "pcb" | "pdf"; selected?: boolean };
const n = (kind: Node["kind"], name: string, selected = false): Node => ({ kind, name, selected });

const nodes: Node[] = [
  n("folder", "nova11 Pro、nova11 Ultra"),
  n("pcb", "Nova11 Pro-HL2GOAM VER.B PCB"),
  n("pdf", "Nova11 Pro-HL2GOAM VER.B-imag"),
  n("pcb", "Nova11 Pro-Light&Distance Senso"),
  n("pcb", "Nova11 Pro-shim A PCB layer.pcb"),
  n("pcb", "Nova11 Pro-shim B PCB layer.pcb"),
  n("folder", "nova11se"),
  n("pcb", "nova11se-HL1BNEMA VER.B PCB la"),
  n("pdf", "nova11se-HL1BNEMA VER.B image"),
  n("folder", "nova11"),
  n("pcb", "Nova11-F0NWL VER.A SUB PCB lay"),
  n("pcb", "Nova11-HL2F0NM VER.A MB PCB l"),
  n("pcb", "Nova11-HL2F0NM VER.A MB+SUB"),
  n("pdf", "Nova11-HL2F0NM VER.A-image.pd"),
  n("pcb", "Nova11-Light&Distance Sensors sh"),
  n("folder", "nova10Z"),
  n("pdf", "Nova 10Z HL7CHLBM Component"),
  n("pdf", "Nova 10Z HL7CHLBM Mainbord im"),
  n("pcb", "Nova 10Z HL7CHLBM PCB Layer.pc"),
  n("pcb", "Nova 10Z HL7CHLBM YiDianTong."),
  n("folder", "nova10se"),
  n("pdf", "nova10se HL1BNEM Mainbord ima"),
  n("pcb", "nova10se HL1BNEM PCB layer.pcb", true),
  n("pdf", "nova10se-9008.pdf"),
  n("pcb", "nova10se-tail plug board PCB laye"),
  n("folder", "nova10 Pro"),
  n("pdf", "nova10Pro-9008.pdf"),
  n("pdf", "nova10Pro-HL1GLORIAM Compon"),
  n("pcb", "nova10Pro-HL1GLORIAM PCB laye"),
  n("pcb", "nova10Pro-HL1GLORIAM YiDianTo"),
];

const layerNames = ["1", "2", "3", "4", "5", "6", "7", "8", "ALL"];
const layerFill = (name: string) => (name === "1" ? "#004000" : name === "8" ? "#008040" : "#505050");

const CategoryItem = ({ label, icon, active }: { label: string; icon: React.ReactNode; active?: boolean }) => (
  <Category $active={active}>
    <CategoryIcon>{icon}</CategoryIcon>
    {label}
  </Category>
);

const CategoryGroup = ({ title, color, after, children }: { title: string; color: string; after: number; children: React.ReactNode }) => (
  <Group $color={color} $after={after}>
    <Frame viewBox="0 0 58 227" aria-hidden="true">
      <rect x="2" y="1" width="54" height="224" rx="7" fill="none" stroke="currentColor" strokeWidth="2" strokeDasharray="6 3" />
    </Frame>
    <GroupTitle>{title}</GroupTitle>
    {children}
  </Group>
);

export default function App() {
  return (
    <Shell>
      <GlobalStyle />
      <TitleBar>
        <Logo />
        <AppTitle>XZZ Schematics V4.77 [ VIP Due date: 2025-10-30 17:50:47 ]</AppTitle>
        <WindowButtons>
          <button aria-label="Toolbox">
            <svg width="18" height="18" viewBox="0 0 18 18" fill="none" stroke="#dbe34a" strokeWidth="1.500">
              <rect x="1.500" y="5" width="15" height="11.500" rx="1" /><path d="M5 5V2.500q0-1 1-1h6q1 0 1 1V5M4 9h10" />
            </svg>
          </button>
          <TitleDivider />
          <button aria-label="Minimize"><Icon size={20} color="#fff" width={2}><path d="M2 12h20" /></Icon></button>
          <button aria-label="Maximize"><Icon size={20} color="#fff" width={1.8}><rect x="3" y="3" width="18" height="18" rx="4" /></Icon></button>
          <button aria-label="Close"><Icon size={20} color="#fff" width={1.8}><path d="M3 3l18 18M21 3L3 21" /></Icon></button>
        </WindowButtons>
      </TitleBar>
      <MenuBar>
        {["File(F)", "VIP(V)", "Tool(T)", "Settings(S)", "PCB View settings(S)"].map((m) => (
          <MenuButton key={m}>{m}</MenuButton>
        ))}
      </MenuBar>
      <Workspace>
        <SideBar>
          <SearchRow onSubmit={(e) => e.preventDefault()}>
            <ShrinkButton type="button">Shrink</ShrinkButton>
            <SearchField>
              <SearchInput aria-label="Search" defaultValue="Mate70-HL1ZFTSHR SUB PCB" />
              <button type="button" aria-label="History">
                <svg width="14" height="8" viewBox="0 0 14 8" fill="none" stroke="#999" strokeWidth="1.500"><path d="M1 1l6 6 6-6" /></svg>
              </button>
              <button type="button" aria-label="Clear">
                <svg width="16" height="16" viewBox="0 0 16 16"><circle cx="8" cy="8" r="8" fill="#4d8be8" /><path d="M5 5l6 6M11 5l-6 6" stroke="#fff" strokeWidth="1.500" /></svg>
              </button>
            </SearchField>
            <SearchButton aria-label="Search">
              <svg width="20" height="20" viewBox="0 0 20 20" fill="none" stroke="#fff" strokeWidth="1.600"><circle cx="10" cy="10" r="8.500" /><path d="M15.500 16l2.500 2.500" /></svg>
            </SearchButton>
          </SearchRow>
          <SideBody>
            <Categories>
              <CategoryGroup title="VIP" color="#3296f8" after={24}>
                <CategoryItem label="Cour..." icon={<CourseIcon />} />
                <CategoryItem label="Phone" icon={<PhoneIcon />} active />
                <CategoryItem label="Com..." icon={<LaptopIcon />} />
              </CategoryGroup>
              <CategoryGroup title="Custom" color="#646a80" after={9}>
                <CategoryItem label="Drone" icon={<DroneIcon />} />
                <CategoryItem label="Gam..." icon={<PadIcon />} />
                <CategoryItem label="Car" icon={<CarIcon />} />
              </CategoryGroup>
              <CategoryItem label="Favorites" icon={<StarIcon />} />
            </Categories>
            <Tree>
              {nodes.map((node, i) => (
                <TreeRow key={i} $leaf={node.kind !== "folder"}>
                  <TreeIcon>{node.kind === "folder" ? <CollapseIcon /> : node.kind === "pcb" ? <BoardFileIcon /> : <PdfIcon />}</TreeIcon>
                  <TreeLabel href="#" $selected={node.selected}>{node.name}</TreeLabel>
                </TreeRow>
              ))}
            </Tree>
            <InnerTrack><InnerThumb /></InnerTrack>
            <OuterTrack>
              <svg width="10" height="6" viewBox="0 0 10 6" fill="none" stroke="#555"><path d="M1 5l4-4 4 4" /></svg>
              <OuterThumb />
            </OuterTrack>
          </SideBody>
        </SideBar>
        <Gutter $offset={336}><LeftHandle /></Gutter>
        <Main>
          <TabRow>
            <Tab>
              <Icon size={20} color="#000" width={1.9}><path d="M1 13L12 2l11 11M4 11v11h16V11M10 22v-7h5v7" /></Icon>
              Member Center
            </Tab>
            <Tab $active>nova10se HL1BNEM PCB layer.pcb</Tab>
            <Spacer />
            <button aria-label="Close all tabs">
              <svg width="20" height="20" viewBox="0 0 20 20"><path d="M2.500 16V2.500H16" fill="none" stroke="#777" strokeWidth="2" /><rect x="6" y="6" width="13" height="13" rx="2" fill="#777" /><path d="M9.500 9.500l6 6M15.500 9.500l-6 6" stroke="#fff" strokeWidth="1.500" /></svg>
            </button>
          </TabRow>
          <MainBody>
            <ViewColumn>
              <ToolBar>
                <Tool aria-label="Split view"><Icon width={1.2}><path d="M2.500 4.500h8v16h-8zM13.500 4.500h8v16h-8z" /></Icon></Tool>
                <ToolDivider />
                <Tool aria-label="Zoom in"><Icon width={2} color="#222"><circle cx="11" cy="12" r="7" /><path d="M16 17l4 4M11 8.500v7M7.500 12h7" /></Icon></Tool>
                <Tool aria-label="Zoom out"><Icon width={1.5}><circle cx="11" cy="11.500" r="7" /><path d="M16 16.500l4.500 4.500M7.500 11.500h7" /></Icon></Tool>
                <ToolDivider />
                <Tool aria-label="Fit"><Icon width={1.3} color="#444"><circle cx="12" cy="12" r="5.500" /><path d="M4 8V4h4M16 4h4v4M20 16v4h-4M8 20H4v-4" /></Icon></Tool>
                <ToolDivider />
                <Tool aria-label="Rotate right"><Icon width={1.6}><rect x="4" y="9.500" width="15" height="11.500" rx="1" /><path d="M5 6Q7 4 11 4h8M15 1.500l4.500 3-3 3.500" /></Icon></Tool>
                <Tool aria-label="Rotate left"><Icon width={1.6}><rect x="5" y="9.500" width="15" height="11.500" rx="1" /><path d="M19 6Q17 4 13 4H5M9 1.500l-4.500 3 3 3.500" /></Icon></Tool>
                <ToolDivider />
                <Tool aria-label="Paint"><Icon width={1.7}><path d="M5 3h13v6H5zM18 6h3v6h-9v3M10 15h4v7h-4zM5 6H3" /></Icon></Tool>
                <ToolDivider />
                <Tool aria-label="Mirror"><Icon width={1.5}><path d="M12 3v18M4 4l4 3v10l-4 3zM20 4l-4 3v10l4 3z" /></Icon></Tool>
                <Tool $on aria-label="Lamp"><Icon width={1.5} color="#f01414"><path d="M3 13a9 8 0 0 1 18 0zM12 2v3M8 14a4 3.500 0 0 0 8 0M6 17l-2 2M18 17l2 2M9 19l-1 3M15 19l1 3M12 19v2" /></Icon></Tool>
                <Tool>3D</Tool>
                <Tool $on aria-label="Diode"><Icon width={1.5} color="#4088f4"><path d="M0 12h24M19 6v12" /><path d="M8 6l10 6-10 6z" fill="#4088f4" /></Icon></Tool>
                <Tool $on aria-label="Routes">
                  <Icon width={1.2} color="#222">
                    <rect x="2.500" y="2.500" width="19" height="19" rx="2" />
                    <path d="M5 4.500l15 14.500" stroke="#16b43c" />
                    <path d="M4 19l2-2h3l1-2M14 19.500l-3-3.500" stroke="#f01414" /><circle cx="7" cy="12.500" r="1.600" stroke="#f01414" />
                    <path d="M16 9l3 1.500v3M18 5l2-1" stroke="#2d86f0" /><circle cx="15" cy="7" r="1.600" stroke="#2d86f0" />
                  </Icon>
                </Tool>
                <Tool aria-label="Curve"><Icon width={1.6}><circle cx="5" cy="19" r="2" /><circle cx="19" cy="4.500" r="2" /><path d="M5.500 17Q7 6 17 5" /></Icon></Tool>
                <ToolDivider />
                <Tool aria-label="Mouse"><Icon width={1.6}><rect x="6" y="4" width="13" height="17" rx="5" /><path d="M6 11h13M12.500 4v3" /><rect x="11" y="7" width="3" height="4" rx="1" /></Icon></Tool>
                <ToolDivider />
                <SchemeButton>[ColorScheme]</SchemeButton>
                <ToolDivider />
                <Tool aria-label="Visibility"><Icon width={1.5} color="#4d88e0"><path d="M3 12q9-14 18 0-9 14-18 0z" /><circle cx="12" cy="12" r="4.500" /><circle cx="12" cy="12" r="1.500" /></Icon></Tool>
                <Spacer />
                <Tool aria-label="Side panel"><Icon width={1.5} color="#666"><path d="M1.500 3.500h21v17h-21zM8 3.500v17M12 8h7M12 12h7M12 16h7" /></Icon></Tool>
              </ToolBar>
              <Canvas>
                <Boards />
                <LayerPanel>
                  {layerNames.map((name) => (
                    <LayerButton key={name} $fill={layerFill(name)} $long={name.length > 1}>{name}</LayerButton>
                  ))}
                </LayerPanel>
              </Canvas>
            </ViewColumn>
            <RightGutter $offset={326}><Handle /></RightGutter>
          </MainBody>
        </Main>
      </Workspace>
      <StatusBar>XZZ Schematics https://www.xzz.hk</StatusBar>
    </Shell>
  );
}
